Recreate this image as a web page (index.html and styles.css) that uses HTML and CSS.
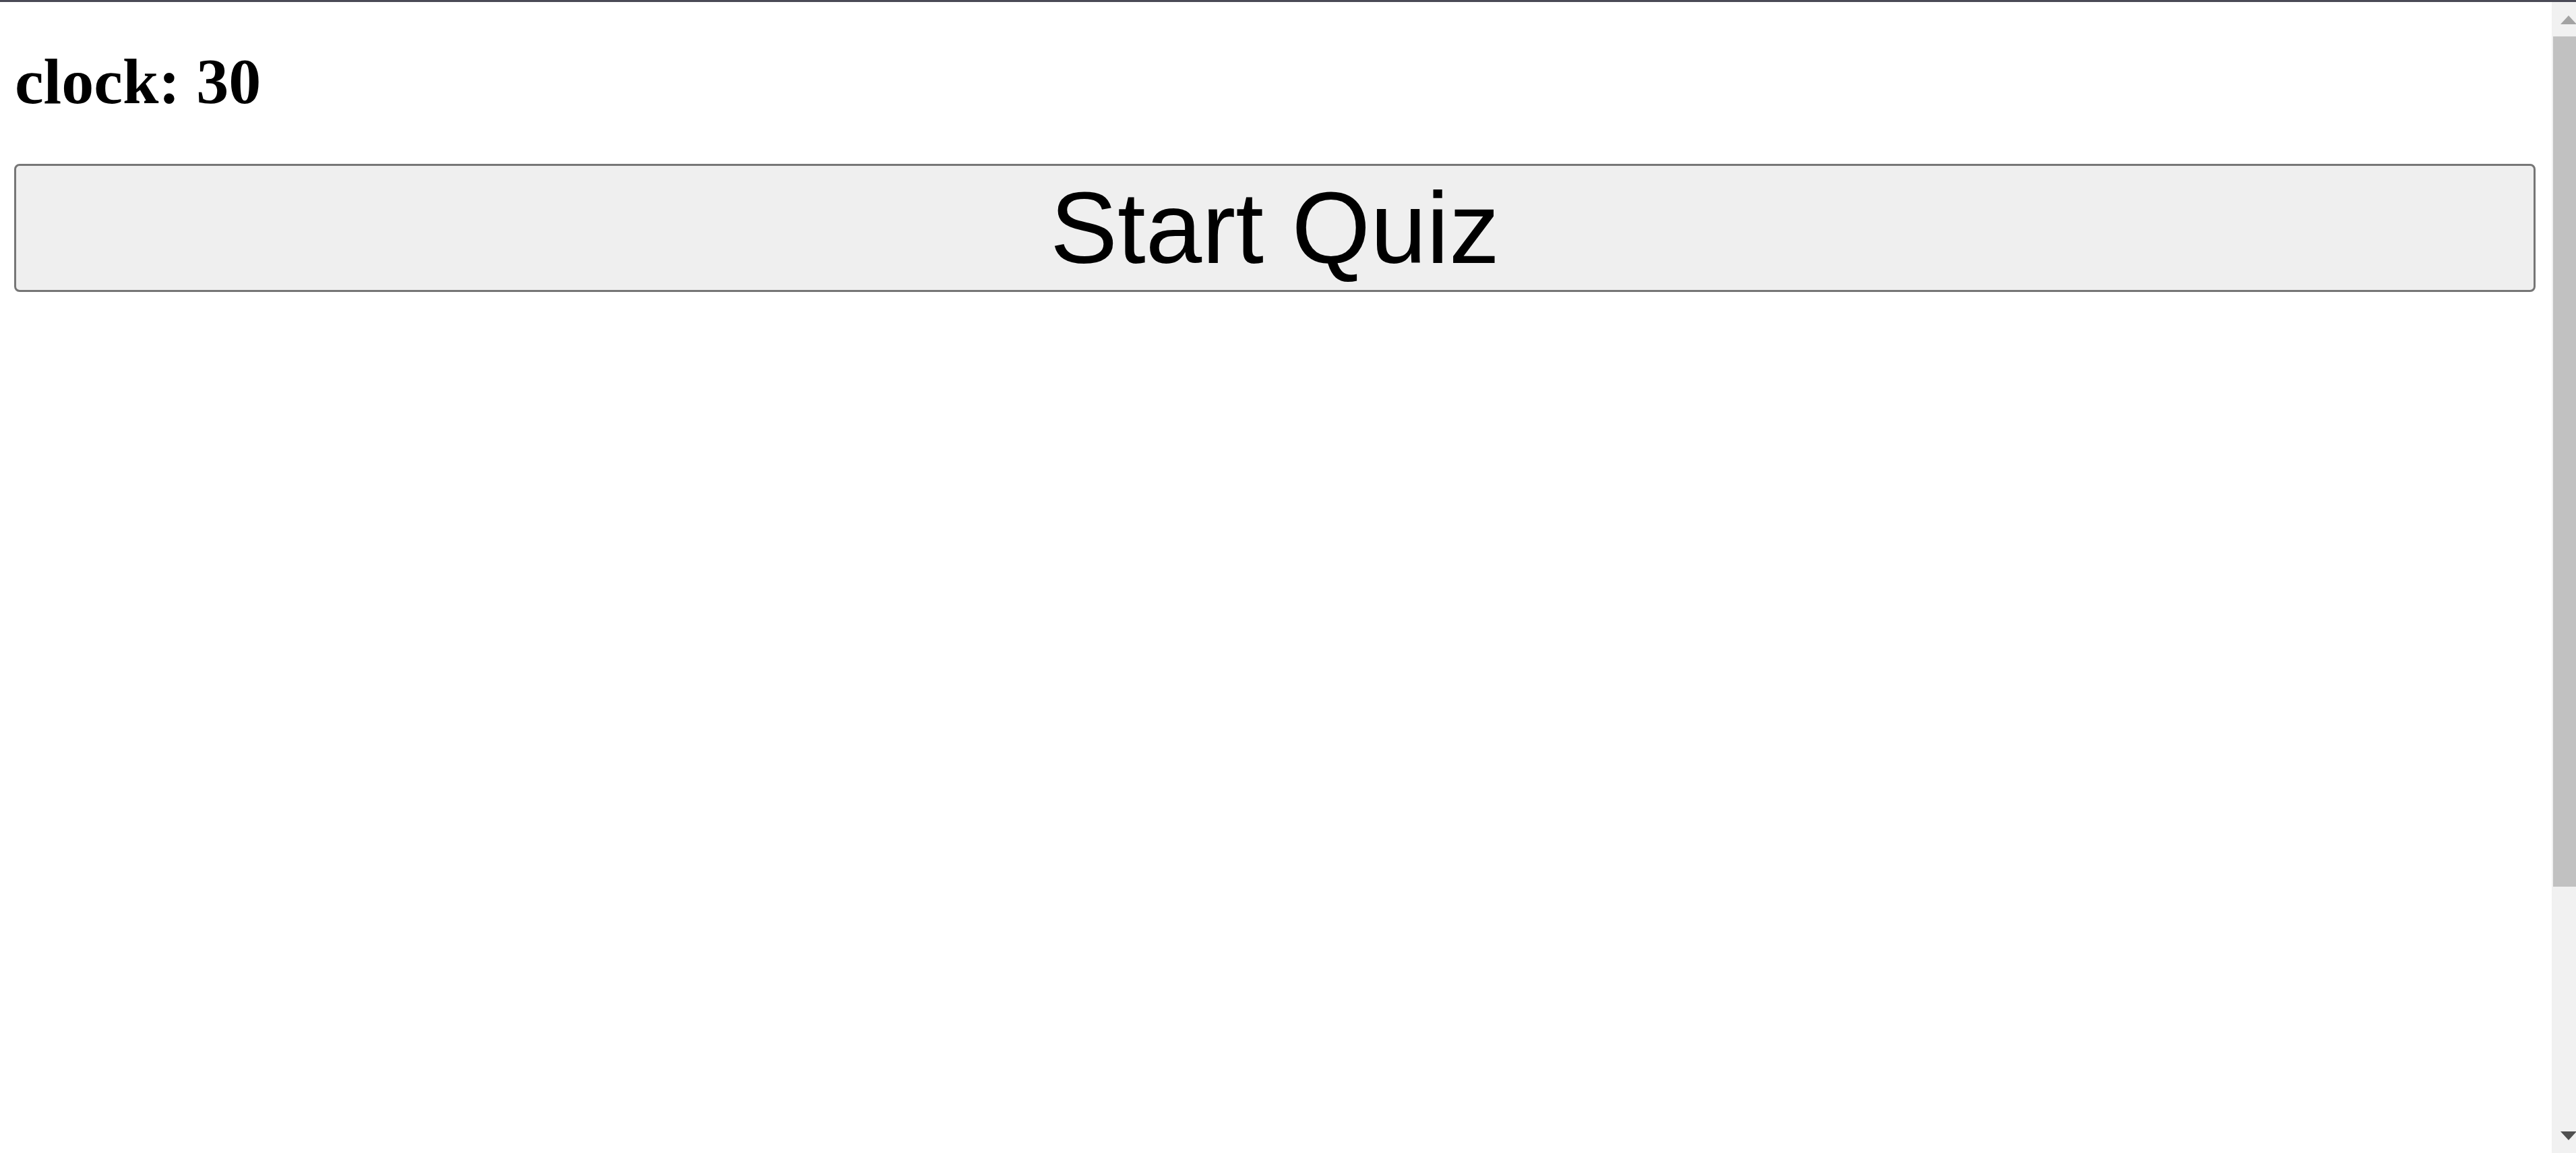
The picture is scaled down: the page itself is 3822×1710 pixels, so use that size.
FILE: index.html
```html
<!DOCTYPE html>
<html lang="en">
<head>
<meta charset="utf-8">
<title>Quiz</title>
<link rel="stylesheet" href="styles.css">
</head>
<body>
<div class="topbar"></div>
<div class="window">
  <main class="page">
    <h1 class="clock">clock: 30</h1>
    <button class="start" type="button">Start Quiz</button>
  </main>
  <div class="scrollbar">
    <div class="arrow-area up"><span class="tri tri-up"></span></div>
    <div class="track"><div class="thumb"></div></div>
    <div class="arrow-area down"><span class="tri tri-down"></span></div>
  </div>
</div>
</body>
</html>
```
FILE: styles.css
```css
html, body {
  margin: 0;
  padding: 0;
  height: 100%;
  overflow: hidden;
  background: #ffffff;
}

.topbar {
  height: 3px;
  background: #4a4a56;
}

.window {
  display: flex;
  height: calc(100vh - 3px);
}

.page {
  flex: 1;
  padding: 0 24px 0 22px;
  min-width: 0;
}

.clock {
  margin: 63px 0 67px;
  font: 700 96px/110px "Liberation Serif", "Times New Roman", serif;
  color: #000;
}

.start {
  display: block;
  box-sizing: border-box;
  width: calc(100% + 1px);
  margin-left: -1px;
  height: 190px;
  padding: 0;
  border: 3px solid #767676;
  border-radius: 8px;
  background: #efefef;
  color: #000;
  font: 400 150px/1 "Liberation Sans", Arial, sans-serif;
  text-align: center;
}

.scrollbar {
  width: 36px;
  flex: none;
  background: #f1f1f1;
  display: flex;
  flex-direction: column;
  overflow: hidden;
}

.arrow-area {
  height: 51px;
  flex: none;
  box-sizing: border-box;
  padding-left: 13px;
}

.arrow-area.up { padding-top: 20px; }
.arrow-area.down { padding-top: 19px; }

.tri {
  display: block;
  width: 0;
  height: 0;
  border-left: 12px solid transparent;
  border-right: 12px solid transparent;
}

.tri-up { border-bottom: 13px solid #a3a3a3; }
.tri-down { border-top: 13px solid #505050; }

.track {
  flex: 1;
  padding-left: 2px;
}

.thumb {
  height: 1261px;
  background: #c1c1c1;
}
```
